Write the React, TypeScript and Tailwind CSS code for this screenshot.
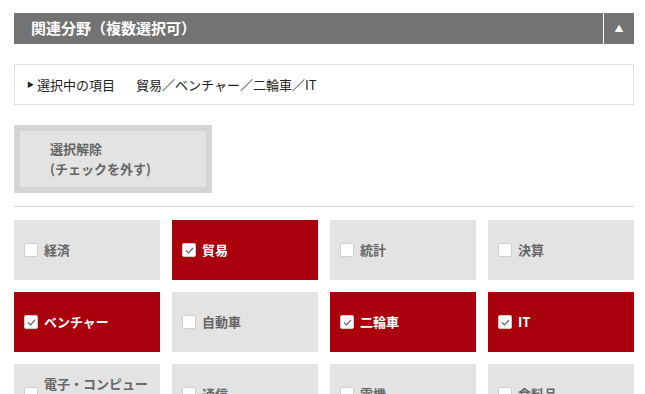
import React from 'react';

const font = { fontFamily: '"Noto Sans CJK JP", "Noto Sans", sans-serif' };

type Item = { label: string; checked: boolean };

const items: Item[] = [
  { label: '経済', checked: false },
  { label: '貿易', checked: true },
  { label: '統計', checked: false },
  { label: '決算', checked: false },
  { label: 'ベンチャー', checked: true },
  { label: '自動車', checked: false },
  { label: '二輪車', checked: true },
  { label: 'IT', checked: true },
  { label: '電子・コンピュータ', checked: false },
  { label: '通信', checked: false },
  { label: '電機', checked: false },
  { label: '食料品', checked: false },
];

const CheckBox: React.FC<{ checked: boolean }> = ({ checked }) => (
  <span className="flex h-[14px] w-[14px] shrink-0 items-center justify-center rounded-[2px] border border-[#cfcfcf] bg-white">
    {checked && (
      <svg width="9" height="7" viewBox="0 0 9 7" fill="none">
        <path d="M1 3.5 L3.5 6 L8 1" stroke="#666" strokeWidth="1.2" />
      </svg>
    )}
  </span>
);

export default function App() {
  return (
    <div className="min-h-[394px] bg-white pt-[13px]" style={font}>
      <div className="ml-[14px] w-[620px]">
        <div className="flex h-[31px] bg-[#737373] text-white">
          <div className="flex flex-1 items-center pl-[17px] text-[15px] font-bold">関連分野（複数選択可）</div>
          <div className="w-px bg-white" />
          <div className="flex w-[30px] items-center justify-center text-[9px]">▲</div>
        </div>

        <div className="mt-[20px] flex h-[41px] items-center border border-[#e0e0e0] pl-[12px] text-[13px] text-[#222]">
          <span className="mr-[3px] text-[7px]">▶</span>
          <span>選択中の項目</span>
          <span className="ml-[21px]">貿易／ベンチャー／二輪車／IT</span>
        </div>

        <button className="mt-[20px] block w-[198px] border-[6px] border-[#d4d4d4] bg-[#e3e3e3] py-[8px] pl-[30px] text-left text-[13px] font-bold leading-[20px] text-[#666]">
          選択解除
          <br />
          (チェックを外す)
        </button>

        <div className="mt-[13px] h-px bg-[#d5d5d5]" />

        <div className="mt-[13px] grid grid-cols-4 gap-[12px]">
          {items.map(item => (
            <div
              key={item.label}
              className={`flex h-[60px] items-center gap-[6px] pl-[10px] pr-[8px] text-[13px] font-bold leading-[20px] ${
                item.checked ? 'bg-[#aa000e] text-white' : 'bg-[#e3e3e3] text-[#666]'
              }`}
            >
              <CheckBox checked={item.checked} />
              <span>{item.label}</span>
            </div>
          ))}
        </div>
      </div>
    </div>
  );
}
